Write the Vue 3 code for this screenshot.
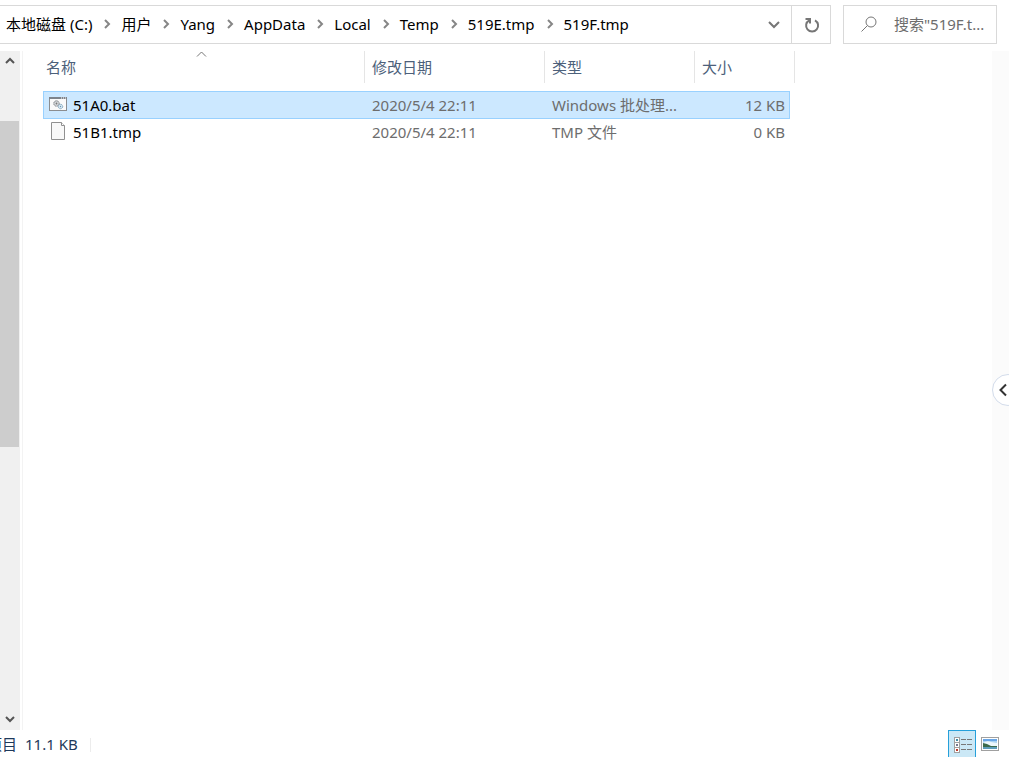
<script setup>
import { ref } from 'vue'

const crumbs = ['本地磁盘 (C:)', '用户', 'Yang', 'AppData', 'Local', 'Temp', '519E.tmp', '519F.tmp']
const columns = ['名称', '修改日期', '类型', '大小']
const files = [
  { name: '51A0.bat', date: '2020/5/4 22:11', type: 'Windows 批处理...', size: '12 KB', icon: 'bat' },
  { name: '51B1.tmp', date: '2020/5/4 22:11', type: 'TMP 文件', size: '0 KB', icon: 'file' }
]
const selected = ref('51A0.bat')
const query = ref('')
</script>

<template>
  <div class="explorer">
    <header class="toolbar">
      <div class="address">
        <nav class="crumbs" aria-label="路径">
          <template v-for="(crumb, i) in crumbs" :key="crumb">
            <svg v-if="i > 0" class="sep" viewBox="0 0 29 16" aria-hidden="true">
              <path d="M13 4l4 4-4 4" />
            </svg>
            <button type="button" class="crumb">{{ crumb }}</button>
          </template>
        </nav>
        <button type="button" class="history" aria-label="以前的位置">
          <svg viewBox="0 0 14 10"><path d="M2 2l5 5 5-5" /></svg>
        </button>
        <button type="button" class="refresh" aria-label="刷新">
          <svg viewBox="0 0 18 18">
            <path d="M12 4.300a6 6 0 1 1-5.800 0" />
            <path d="M2.500 3h4.500v4.500" />
          </svg>
        </button>
      </div>
      <label class="search">
        <svg viewBox="0 0 18 18" aria-hidden="true">
          <circle cx="11" cy="7" r="5" />
          <path d="M7.500 10.500L1.500 16.500" />
        </svg>
        <input v-model="query" type="text" aria-label="搜索" placeholder="搜索&quot;519F.t..." />
      </label>
    </header>

    <main class="body">
      <div class="scrollbar">
        <button type="button" aria-label="向上滚动">
          <svg viewBox="0 0 12 10"><path d="M2 7l4-4 4 4" /></svg>
        </button>
        <div class="track"><div class="thumb"></div></div>
        <button type="button" aria-label="向下滚动">
          <svg viewBox="0 0 12 10"><path d="M2 2l4 4 4-4" /></svg>
        </button>
      </div>

      <section class="listing">
        <table>
          <thead>
            <tr>
              <th v-for="(column, i) in columns" :key="column" scope="col">
                {{ column }}
                <svg v-if="i === 0" class="sort" viewBox="0 0 11 6" aria-hidden="true">
                  <path d="M1 5.500l4.500-4.500 4.500 4.500" />
                </svg>
              </th>
            </tr>
          </thead>
          <tbody>
            <tr
              v-for="file in files"
              :key="file.name"
              :class="{ selected: file.name === selected }"
              @click="selected = file.name"
            >
              <td class="name">
                <svg v-if="file.icon === 'bat'" viewBox="0 0 18 18" aria-hidden="true">
                  <rect x="0.500" y="2.500" width="17" height="13" fill="#fafafa" stroke="#8b8d90" />
                  <path d="M0 3h18" stroke="#7d838b" stroke-width="2" />
                  <path d="M12 3h1M14 3h1M16 3h1" stroke="#fff" />
                  <circle cx="7.500" cy="8.500" r="2.700" fill="#d6d9dc" stroke="#7f8388" stroke-dasharray="1.700 .5" />
                  <circle cx="7.500" cy="8.500" r=".9" fill="#777" />
                  <circle cx="11.500" cy="11.500" r="2.200" fill="#d9ebf5" stroke="#7fa3bb" stroke-dasharray="1.500 .5" />
                  <circle cx="11.500" cy="11.500" r=".7" fill="#6d94ad" />
                </svg>
                <svg v-else viewBox="0 0 18 18" aria-hidden="true">
                  <path d="M2.500 .5h10l3 3v14h-13z" fill="#f8f8f8" stroke="#909090" />
                  <path d="M12.500 .5v3h3" fill="#fff" stroke="#909090" />
                </svg>
                <span>{{ file.name }}</span>
              </td>
              <td>{{ file.date }}</td>
              <td>{{ file.type }}</td>
              <td class="size">{{ file.size }}</td>
            </tr>
          </tbody>
        </table>
      </section>

      <aside class="edge">
        <button type="button" class="expand" aria-label="展开侧栏">
          <svg viewBox="0 0 10 14"><path d="M8 1.500L2.500 7l5.500 5.500" /></svg>
        </button>
      </aside>
    </main>

    <footer class="status">
      <span>项目</span>
      <span class="total">11.1 KB</span>
      <div class="views">
        <button type="button" class="view active" aria-label="详细信息">
          <svg viewBox="0 0 20 18">
            <g fill="#fff" stroke="#a0a0a0">
              <rect x="2.500" y="2.500" width="5" height="5" />
              <rect x="2.500" y="7.500" width="5" height="5" />
              <rect x="2.500" y="12.500" width="5" height="5" />
            </g>
            <path d="M4 5h2" stroke="#3d8ba6" stroke-width="2" />
            <path d="M4 10h2" stroke="#74788f" stroke-width="2" />
            <path d="M4 15h2" stroke="#c0392b" stroke-width="2" />
            <path d="M9 4.500h5M15 4.500h5M9 9.500h5M15 9.500h5M9 14.500h5M15 14.500h5" stroke="#777" />
          </svg>
        </button>
        <button type="button" class="view" aria-label="大缩略图">
          <svg viewBox="0 0 20 18">
            <rect x="1.500" y="2.500" width="17" height="13" fill="#fff" stroke="#a0a0a0" />
            <path d="M3 4h14v10H3z" fill="#a9d2f2" />
            <path d="M3 4h14v2H3z" fill="#6aa6e6" />
            <path d="M3 8q4-3 8-1l6 1v3H3z" fill="#edf7fb" />
            <path d="M3 8l4 1 4 2 6 0v1H3z" fill="#3c6b4c" />
            <path d="M3 12h14v2H3z" fill="#5d9dbb" />
          </svg>
        </button>
      </div>
    </footer>
  </div>
</template>

<style>
body {
  margin: 0;
  background: #fff;
}
</style>

<style scoped>
.explorer {
  box-sizing: border-box;
  display: flex;
  flex-direction: column;
  height: 100vh;
  margin-right: 1px;
  padding-top: 5px;
  overflow: hidden;
  background: #fff;
  color: #000;
  font-family: "Noto Sans", "Noto Sans CJK SC", sans-serif;
  font-size: 15px;
  line-height: 20px;
}

button {
  display: flex;
  align-items: center;
  justify-content: center;
  padding: 0;
  border: 0;
  background: none;
  color: inherit;
  font: inherit;
}

svg {
  flex: none;
  fill: none;
}

.toolbar {
  display: flex;
  gap: 12px;
  padding-right: 12px;
  margin-bottom: 7px;
}

.address {
  box-sizing: border-box;
  display: flex;
  flex: 1;
  height: 39px;
  border: 1px solid #d9d9d9;
  border-left: 0;
}

.crumbs {
  display: flex;
  flex: 1;
  align-items: center;
  padding: 0 0 2px 6px;
  white-space: nowrap;
}

.sep {
  width: 29px;
  height: 16px;
  stroke: #868686;
  stroke-width: 2;
}

.history {
  width: 36px;
  padding-left: 2px;
}

.history svg {
  width: 14px;
  height: 10px;
  stroke: #767676;
  stroke-width: 2;
}

.refresh {
  width: 39px;
  padding-left: 2px;
  border-left: 1px solid #d9d9d9;
}

.refresh svg {
  width: 18px;
  height: 18px;
  stroke: #767676;
  stroke-width: 2;
}

.search {
  box-sizing: border-box;
  display: flex;
  align-items: center;
  gap: 16px;
  width: 154px;
  padding: 0 0 2px 16px;
  border: 1px solid #d9d9d9;
}

.search svg {
  width: 18px;
  height: 18px;
  stroke: #767676;
}

.search input {
  flex: 1;
  min-width: 0;
  padding: 0;
  border: 0;
  outline: 0;
  background: none;
  color: #000;
  font: inherit;
}

.search input::placeholder {
  color: #6d6d6d;
  opacity: 1;
}

.body {
  display: flex;
  flex: 1;
  min-height: 0;
}

.scrollbar {
  display: flex;
  flex-direction: column;
  width: 20px;
  background: #f0f0f0;
}

.scrollbar button {
  width: 19px;
  height: 20px;
}

.scrollbar svg {
  width: 12px;
  height: 10px;
  stroke: #555;
  stroke-width: 2;
}

.track {
  display: grid;
  flex: 1;
  grid-template-rows: 50fr 326fr 263fr;
}

.thumb {
  grid-row: 2;
  width: 19px;
  background: #cdcdcd;
}

.listing {
  flex: 1;
  min-width: 0;
  margin-left: 2px;
  padding-left: 20px;
  border-left: 1px solid #f3f3f3;
}

table,
thead,
tbody {
  display: block;
}

tr {
  box-sizing: border-box;
  display: grid;
  grid-template-columns: 322px 180px 150px 100px;
}

thead tr {
  width: 752px;
  margin-bottom: 8px;
}

th {
  position: relative;
  box-sizing: border-box;
  height: 32px;
  padding: 6px 7px;
  border-right: 1px solid #e5e5e5;
  color: #4c607a;
  font-weight: 400;
  text-align: left;
}

th:first-child {
  padding-left: 3px;
}

.sort {
  position: absolute;
  top: 0;
  left: 50%;
  width: 11px;
  height: 6px;
  margin-left: -8px;
  stroke: #767676;
}

tbody tr {
  grid-template-columns: 321px 180px 150px 94px;
  width: 747px;
  height: 27px;
  border: solid transparent;
  border-width: 0 1px;
}

tbody tr.selected {
  height: 28px;
  border: 1px solid #99d1ff;
  background: #cce8ff;
}

td {
  padding: 3px 7px;
  color: #6d6d6d;
  white-space: nowrap;
}

.name {
  display: flex;
  gap: 6px;
  padding-left: 5px;
  color: #000;
}

.name svg {
  width: 18px;
  height: 18px;
}

.size {
  padding-right: 4px;
  text-align: right;
}

.edge {
  box-sizing: border-box;
  display: flex;
  align-items: center;
  width: 17px;
  padding-bottom: 2px;
  background: #fbfbfb;
}

.expand {
  box-sizing: border-box;
  flex: none;
  width: 32px;
  height: 32px;
  padding-right: 10px;
  border: 1px solid #d3dceb;
  border-radius: 50%;
  background: #fff;
}

.expand svg {
  width: 10px;
  height: 14px;
  stroke: #333;
  stroke-width: 2;
}

.status {
  display: flex;
  height: 27px;
  margin-left: -13px;
  color: #1e395b;
  line-height: 28px;
  white-space: nowrap;
}

.total {
  margin-left: 8px;
}

.total::after {
  content: "";
  display: inline-block;
  width: 1px;
  height: 14px;
  margin-left: 12px;
  background: #ececec;
  vertical-align: -2px;
}

.views {
  display: flex;
  margin-left: auto;
  padding-right: 5px;
}

.view {
  box-sizing: border-box;
  width: 28px;
  height: 28px;
}

.view.active {
  border: 1px solid #26a0da;
  background: #cbe8f6;
}

.view svg {
  width: 20px;
  height: 18px;
}
</style>
